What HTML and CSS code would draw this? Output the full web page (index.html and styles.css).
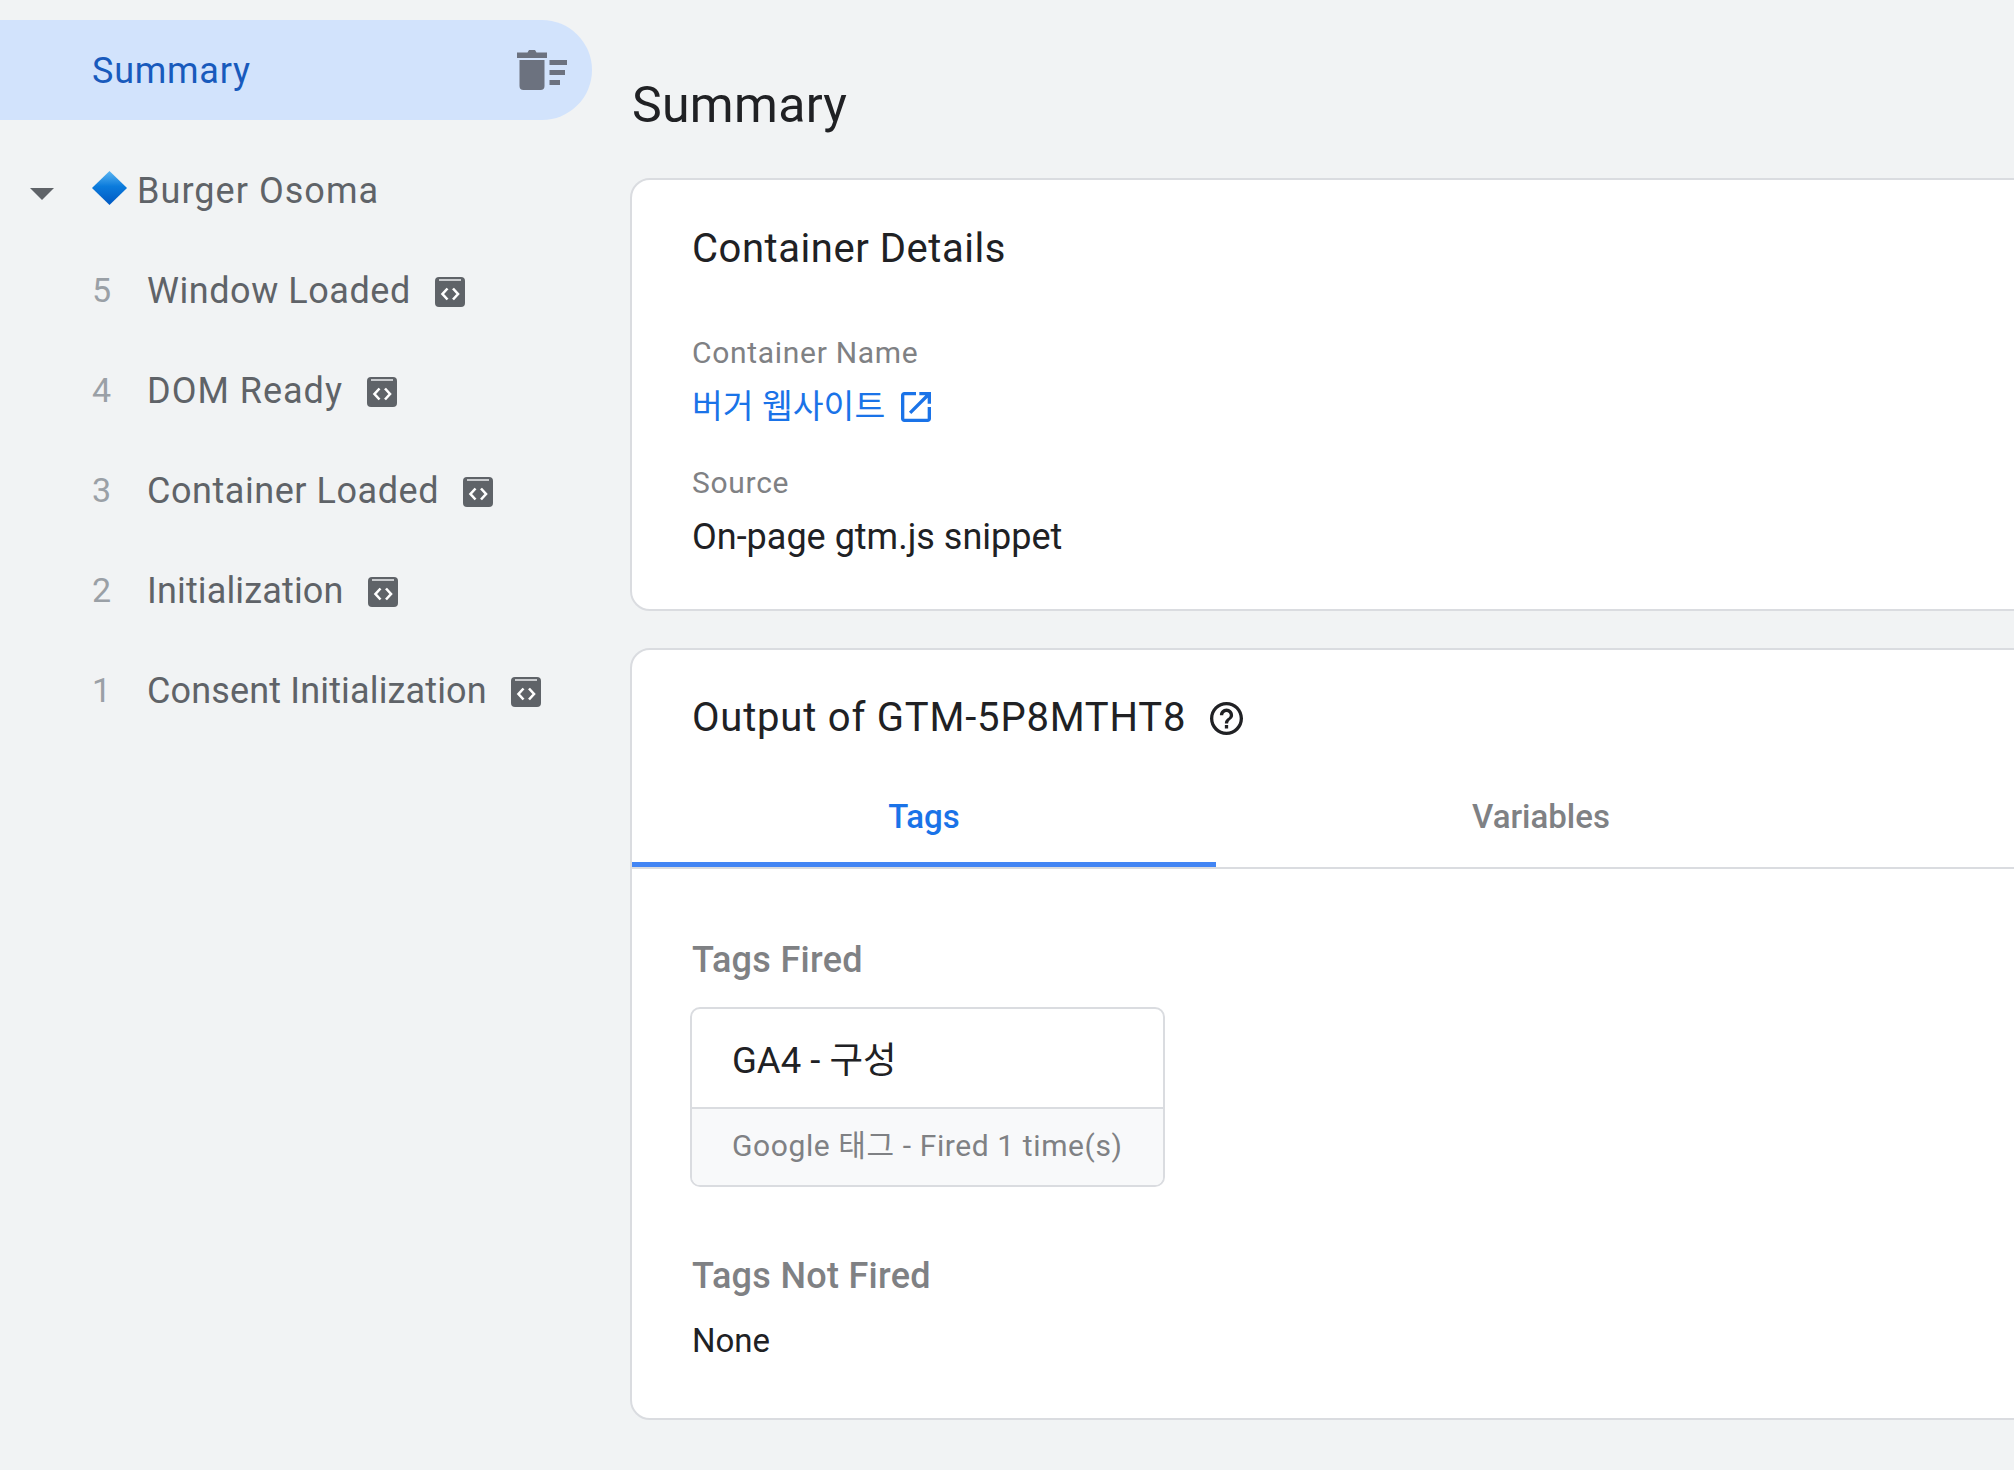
FILE: index.html
```html
<!DOCTYPE html>
<html lang="en">
<head>
    <meta charset="UTF-8">
    <meta name="viewport" content="width=device-width, initial-scale=1.0">
    <title>Summary</title>
    <link rel="stylesheet" href="styles.css">
</head>
<body>
    <svg class="defs" width="0" height="0">
        <symbol id="code-box" viewBox="0 0 30 30">
            <rect width="30" height="30" rx="4" fill="#5f6368"/>
            <rect x="4" y="2" width="22" height="2" fill="#c9cbce"/>
            <path d="M12.5 11.5L7.5 17l5 5.5M18 11.5l5 5.5-5 5.5" fill="none" stroke="#fff" stroke-width="2.6"/>
        </symbol>
    </svg>

    <nav class="sidebar">
        <div class="nav-summary">
            <span class="summary-label">Summary</span>
            <svg class="clear-icon" width="50" height="40" viewBox="0 0 50 40">
                <path d="M0 2.5h10.5L12 0h6l1.500 2.500H30V8H0zM2.500 10h25v26a4 4 0 0 1-4 4h-17a4 4 0 0 1-4-4z" fill="#6c727f"/>
                <path d="M32.500 10H50v5H32.500zM32.500 20H48v5H32.500zM32.500 30H43v5H32.500z" fill="#6c727f"/>
            </svg>
        </div>

        <div class="nav-page">
            <span class="caret"></span>
            <svg class="diamond" width="35" height="34" viewBox="0 0 35 34">
                <defs>
                    <linearGradient id="blue-fill" x1="0" y1="0" x2="0" y2="1">
                        <stop offset="0" stop-color="#5cb6f2"/>
                        <stop offset="0.45" stop-color="#0b7bdc"/>
                        <stop offset="1" stop-color="#0058c2"/>
                    </linearGradient>
                </defs>
                <path d="M17.500 0L35 17 17.500 34 0 17z" fill="url(#blue-fill)"/>
            </svg>
            <span class="page-label">Burger Osoma</span>
        </div>

        <div class="nav-event">
            <span class="event-num">5</span>
            <span class="event-label spaced-md">Window Loaded</span>
            <svg class="code-icon"><use href="#code-box"/></svg>
        </div>
        <div class="nav-event">
            <span class="event-num">4</span>
            <span class="event-label spaced-lg">DOM Ready</span>
            <svg class="code-icon"><use href="#code-box"/></svg>
        </div>
        <div class="nav-event">
            <span class="event-num">3</span>
            <span class="event-label spaced-md">Container Loaded</span>
            <svg class="code-icon"><use href="#code-box"/></svg>
        </div>
        <div class="nav-event">
            <span class="event-num">2</span>
            <span class="event-label spaced-sm">Initialization</span>
            <svg class="code-icon"><use href="#code-box"/></svg>
        </div>
        <div class="nav-event">
            <span class="event-num">1</span>
            <span class="event-label spaced-sm">Consent Initialization</span>
            <svg class="code-icon"><use href="#code-box"/></svg>
        </div>
    </nav>

    <main class="content">
        <h1 class="page-title">Summary</h1>

        <section class="card details-card">
            <h2 class="card-title">Container Details</h2>
            <div class="field-label first-label">Container Name</div>
            <a class="field-link" href="#">
                버거 웹사이트
                <svg width="30" height="30" viewBox="3 3 18 18">
                    <path d="M19 19H5V5h7V3H5c-1.110 0-2 .9-2 2v14c0 1.100.89 2 2 2h14c1.100 0 2-.9 2-2v-7h-2v7zM14 3v2h3.590l-9.830 9.830 1.410 1.410L19 6.410V10h2V3h-7z" fill="#1a73e8"/>
                </svg>
            </a>
            <div class="field-label source-label">Source</div>
            <div class="field-value">On-page gtm.js snippet</div>
        </section>

        <section class="card output-card">
            <h2 class="card-title output-title">
                Output of GTM-5P8MTHT8
                <svg width="33" height="33" viewBox="2 2 20 20">
                    <path d="M11 18h2v-2h-2v2zm1-16C6.480 2 2 6.480 2 12s4.480 10 10 10 10-4.480 10-10S17.520 2 12 2zm0 18c-4.410 0-8-3.590-8-8s3.590-8 8-8 8 3.590 8 8-3.590 8-8 8zm0-14c-2.210 0-4 1.790-4 4h2c0-1.100.9-2 2-2s2 .9 2 2c0 2-3 1.750-3 5h2c0-2.250 3-2.500 3-5 0-2.210-1.790-4-4-4z" fill="#202124"/>
                </svg>
            </h2>
            <div class="tabs">
                <div class="tab tab-active">Tags</div>
                <div class="tab tab-second">Variables</div>
            </div>
            <div class="tab-body">
                <h3 class="group-title">Tags Fired</h3>
                <div class="tag-card">
                    <div class="tag-name">GA4 - 구성</div>
                    <div class="tag-foot">Google 태그 - Fired 1 time(s)</div>
                </div>
                <h3 class="group-title not-fired">Tags Not Fired</h3>
                <div class="none-text">None</div>
            </div>
        </section>
    </main>
</body>
</html>
```

FILE: styles.css
```css
html, body {
    height: 100%;
}

body {
    margin: 0;
    height: 1470px;
    overflow: hidden;
    display: flex;
    background-color: #f1f3f4;
    color: #202124;
    font-family: 'Roboto', 'Noto Sans CJK KR', sans-serif;
}

.defs {
    position: absolute;
}

.sidebar {
    flex: none;
    width: 592px;
    padding-top: 20px;
}

.nav-summary {
    display: flex;
    align-items: center;
    justify-content: space-between;
    height: 100px;
    padding: 0 25px 0 92px;
    box-sizing: border-box;
    border-radius: 0 50px 50px 0;
    background-color: #d2e3fc;
    color: #185abc;
    font-size: 36px;
}

.summary-label {
    padding-top: 2px;
    letter-spacing: 0.75px;
}

.nav-page {
    display: flex;
    align-items: center;
    height: 100px;
    margin-top: 20px;
    padding-left: 30px;
    color: #5f6368;
    font-size: 36px;
}

.page-label {
    padding-top: 2px;
    letter-spacing: 1.05px;
}

.caret {
    width: 0;
    height: 0;
    margin-right: 38px;
    margin-top: 8px;
    border-left: 12px solid transparent;
    border-right: 12px solid transparent;
    border-top: 12px solid #5f6368;
}

.diamond {
    margin-right: 10px;
    margin-top: -4px;
}

.nav-event {
    display: flex;
    align-items: center;
    height: 100px;
    padding-left: 92px;
    color: #5f6368;
    font-size: 36px;
}

.event-num {
    width: 55px;
    flex: none;
    color: #9aa0a6;
    font-size: 34px;
}

.event-label {
    padding-top: 1px;
}

.spaced-sm {
    letter-spacing: 0.15px;
}

.spaced-md {
    letter-spacing: 0.55px;
}

.spaced-lg {
    letter-spacing: 1px;
}

.code-icon {
    width: 30px;
    height: 30px;
    margin-left: 24px;
    margin-top: 4px;
}

.content {
    flex: none;
    width: 1500px;
    margin-left: 38px;
}

.page-title {
    margin: 0;
    padding: 72px 0 0 2px;
    font-size: 50px;
    font-weight: 400;
    letter-spacing: 0.3px;
    line-height: 66px;
}

.card {
    border: 2px solid #dadce0;
    border-radius: 20px;
    background-color: #fff;
    box-sizing: border-box;
}

.details-card {
    height: 433px;
    margin-top: 40px;
    padding: 41px 60px 0;
}

.card-title {
    margin: 0;
    font-size: 40px;
    font-weight: 400;
    letter-spacing: 0.55px;
    line-height: 56px;
}

.field-label {
    color: #7f8184;
    font-size: 30px;
    letter-spacing: 0.7px;
    line-height: 40px;
}

.first-label {
    margin-top: 56px;
}

.field-link {
    display: flex;
    align-items: center;
    gap: 16px;
    margin-top: 10px;
    color: #1a73e8;
    font-size: 33.5px;
    line-height: 48px;
    text-decoration: none;
}

.source-label {
    margin-top: 32px;
}

.field-value {
    margin-top: 10px;
    font-size: 36px;
    line-height: 48px;
}

.output-card {
    height: 772px;
    margin-top: 37px;
}

.output-title {
    display: flex;
    align-items: center;
    gap: 24px;
    padding: 40px 60px 0;
    letter-spacing: 0.8px;
}

.tabs {
    display: flex;
    height: 94px;
    margin-top: 29px;
    border-bottom: 2px solid #dadce0;
    box-sizing: border-box;
    font-size: 33px;
    font-weight: 500;
    color: #7f8184;
}

.tab {
    display: flex;
    justify-content: center;
    padding-top: 22px;
    box-sizing: border-box;
}

.tab-active {
    width: 584px;
    height: 92px;
    border-bottom: 5px solid #4285f4;
    color: #1a73e8;
}

.tab-second {
    width: 650px;
}

.tab-body {
    padding: 67px 46px 0 60px;
}

.group-title {
    margin: 0;
    color: #7f8184;
    font-size: 36px;
    font-weight: 500;
    letter-spacing: 0.3px;
    line-height: 48px;
}

.tag-card {
    width: 475px;
    height: 180px;
    margin-top: 23px;
    margin-left: -2px;
    border: 2px solid #dadce0;
    border-radius: 10px;
    box-sizing: border-box;
    overflow: hidden;
}

.tag-name {
    height: 98px;
    padding-left: 40px;
    border-bottom: 2px solid #dadce0;
    font-size: 36.5px;
    line-height: 103px;
}

.tag-foot {
    height: 78px;
    padding-left: 40px;
    background-color: #f8f9fa;
    color: #7f8184;
    font-size: 30px;
    letter-spacing: 0.6px;
    line-height: 74px;
}

.not-fired {
    margin-top: 65px;
}

.none-text {
    margin-top: 17px;
    font-size: 33px;
    line-height: 48px;
}
```
